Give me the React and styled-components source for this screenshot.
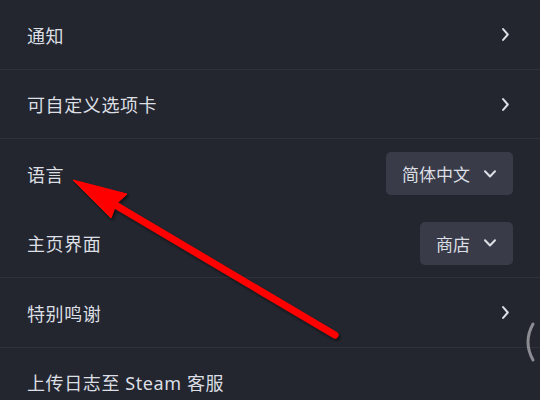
import styled, { createGlobalStyle } from "styled-components";

const GlobalStyle = createGlobalStyle`
  html, body {
    margin: 0;
    padding: 0;
    background: #23262e;
  }
  body {
    font-family: "Noto Sans", "Noto Sans CJK SC", sans-serif;
  }
`;

const Page = styled.div`
  position: relative;
  width: 540px;
  height: 400px;
  overflow: hidden;
  background: #23262e;
`;

const List = styled.div`
  display: flex;
  flex-direction: column;
`;

const Row = styled.div`
  height: 69.5px;
  flex-shrink: 0;
  box-sizing: border-box;
  display: flex;
  align-items: center;
  justify-content: space-between;
  padding: 1px 27px 0 27px;
  border-bottom: 1px solid
    ${(props) => (props.divider ? "#2f313a" : "transparent")};
`;

const Label = styled.span`
  font-size: 18px;
  letter-spacing: 0.6px;
  color: #dcdfe4;
`;

const Chevron = styled.svg`
  width: 7px;
  height: 13px;
  margin-right: 4px;
`;

const Select = styled.div`
  display: flex;
  align-items: center;
  gap: 14px;
  height: 43px;
  box-sizing: border-box;
  padding: 0 17px 0 16px;
  border-radius: 5px;
  background: #393c48;
  color: #dcdfe4;
  font-size: 17px;
`;

const DownIcon = styled.svg`
  width: 12px;
  height: 8px;
`;

const Overlay = styled.svg`
  position: absolute;
  left: 0;
  top: 0;
  width: 540px;
  height: 400px;
  pointer-events: none;
`;

const rows = [
  { label: "通知", kind: "link", divider: true },
  { label: "可自定义选项卡", kind: "link", divider: true },
  { label: "语言", kind: "select", value: "简体中文" },
  { label: "主页界面", kind: "select", value: "商店", divider: true },
  { label: "特别鸣谢", kind: "link", divider: true },
  { label: "上传日志至 Steam 客服", kind: "none" },
];

function Right({ row }) {
  if (row.kind === "link") {
    return (
      <Chevron viewBox="0 0 7 13">
        <polyline
          points="1.1,1.1 5.8,6.5 1.1,11.9"
          fill="none"
          stroke="#dcdfe4"
          strokeWidth="2"
          strokeLinecap="round"
          strokeLinejoin="round"
        />
      </Chevron>
    );
  }
  if (row.kind === "select") {
    return (
      <Select>
        {row.value}
        <DownIcon viewBox="0 0 12 8">
          <polyline
            points="1,1.2 6,6.5 11,1.2"
            fill="none"
            stroke="#dcdfe4"
            strokeWidth="2"
            strokeLinecap="round"
            strokeLinejoin="round"
          />
        </DownIcon>
      </Select>
    );
  }
  return null;
}

export default function App() {
  return (
    <Page>
      <GlobalStyle />
      <List>
        {rows.map((row) => (
          <Row key={row.label} divider={row.divider ? 1 : 0}>
            <Label>{row.label}</Label>
            <Right row={row} />
          </Row>
        ))}
      </List>
      <Overlay viewBox="0 0 540 400">
        <defs>
          <filter id="shadow" x="-20%" y="-20%" width="140%" height="140%">
            <feDropShadow dx="1.5" dy="2" stdDeviation="1.5" floodColor="#000" floodOpacity="0.6" />
          </filter>
        </defs>
        <g filter="url(#shadow)" fill="#ff0000" stroke="#ff0000">
          <line x1="112" y1="203" x2="335" y2="335" strokeWidth="7" strokeLinecap="round" />
          <polygon points="73,180 127,194 116,204 111,218" strokeWidth="1" strokeLinejoin="miter" />
        </g>
        <path
          d="M533 324 Q523 342 533 360"
          fill="none"
          stroke="#8b8d93"
          strokeWidth="3"
          strokeLinecap="round"
        />
      </Overlay>
    </Page>
  );
}
